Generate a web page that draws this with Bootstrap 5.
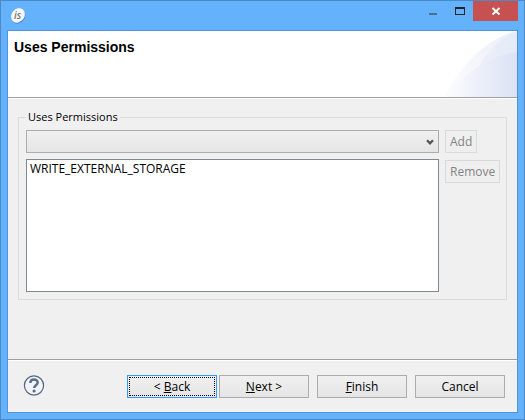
<!DOCTYPE html>
<html lang="en">
<head>
<meta charset="utf-8">
<meta name="viewport" content="width=device-width, initial-scale=1">
<title>Uses Permissions</title>
<link href="https://cdn.jsdelivr.net/npm/bootstrap@5.3.0/dist/css/bootstrap.min.css" rel="stylesheet">
<style>
body { font-family: "Open Sans", "Noto Sans", sans-serif; font-size: 12px; line-height: 16px; color: #000; background: #64b2fc; }
.frame { background: #64b2fc; border: 1px solid #4c8ac6; padding: 0 6px 6px; }
.titlebar { height: 29px; padding-left: 3px; }
.app-icon { margin-top: 6px; }
.caption-btn { border: 0; background: none; padding: 0; width: 27px; height: 20px; }
.caption-close { background: #c75050; width: 45px; }
.client { background: #f0f0f0; border: 1px solid #4f95dc; }
.banner { height: 68px; background: #fff; border-bottom: 1px solid #fff; box-shadow: inset 0 -1px #a0a0a0; }
.banner h1 { font: bold 14px/18px "Liberation Sans", Arial, sans-serif; padding: 7px 6px; }
.banner svg { height: 66px; width: 74px; }
.page { padding: 9px 10px 20px; }
.group { border: 1px solid #dcdcdc; padding: 0 8px 7px 7px; min-width: 0; }
.group legend { float: none; width: auto; font-size: 11px; line-height: 18px; padding: 0 2px; margin: 0 0 4px; }
.perm-select, .perm-list { border-radius: 0; font-size: 12px; color: #000; width: 100%; }
.perm-select { height: 23px; padding: 0 20px 0 4px; border: 1px solid #acacac; appearance: none;
  background: url("data:image/svg+xml,%3Csvg xmlns='http://www.w3.org/2000/svg' width='8' height='7'%3E%3Cpath d='M1 1.2L4 4.4L7 1.2' fill='none' stroke='%23555' stroke-width='2.3'/%3E%3C/svg%3E") no-repeat right 4px top 8px, linear-gradient(#f0f0f0, #e5e5e5); }
.perm-list { height: 133px; border: 1px solid #828790; background: #fff; padding: 0; overflow: hidden; }
.perm-list option { padding: 0 3px; min-height: 16px; line-height: 16px; }
.side { width: 53px; gap: 7px; }
.dlg-btn { border: 1px solid #acacac; border-radius: 0; background: linear-gradient(#f0f0f0, #e5e5e5); color: #000; font-size: 12px; line-height: 16px; padding: 0 4px; height: 23px; }
.dlg-btn:disabled { border-color: #d9d9d9; background: #efefef; color: #838383; opacity: 1; }
.wide { width: 90px; }
.is-default { border-color: #3399ff; outline: 1px dotted #000; outline-offset: -3px; }
.actions { border-top: 1px solid #a0a0a0; box-shadow: inset 0 1px #fff; padding: 15px 12px 14px 15px; }
.help-btn { border: 0; background: none; padding: 0; width: 22px; height: 22px; }
.col-gap { gap: 6px; }
.pair { gap: 2px; }
</style>
<script src="https://cdn.jsdelivr.net/npm/bootstrap@5.3.0/dist/js/bootstrap.bundle.min.js"></script>
</head>
<body>
<div class="frame d-flex flex-column min-vh-100">
  <header class="titlebar d-flex align-items-start">
    <svg class="app-icon me-auto" width="16" height="17" viewBox="0 0 16 17" aria-label="is"><ellipse cx="8.6" cy="9" rx="6.4" ry="7.8" transform="rotate(38 8 9)" fill="#5285ce"/><ellipse cx="8" cy="8.4" rx="6.4" ry="7.7" transform="rotate(38 8 8.4)" fill="#f7f9fc"/><text x="4" y="12" font-family="Open Sans" font-size="10" font-style="italic" font-weight="600" fill="#777">is</text></svg>
    <button class="caption-btn d-flex" aria-label="Minimize"><svg width="27" height="20"><path d="M10 12h8v2h-8z" fill="#47708f"/></svg></button>
    <button class="caption-btn d-flex" aria-label="Maximize"><svg width="27" height="20"><path d="M9 6h10v8H9zM10 8v5h8V8z" fill="#252525" fill-rule="evenodd"/></svg></button>
    <button class="caption-btn caption-close d-flex" aria-label="Close"><svg width="45" height="20"><path d="M19.5 7L26.5 13.5M26.5 7L19.5 13.5" stroke="#fff" stroke-width="2"/></svg></button>
  </header>
  <main class="client d-flex flex-column flex-grow-1">
    <div class="banner d-flex justify-content-between align-items-start">
      <h1 class="m-0">Uses Permissions</h1>
      <svg viewBox="0 0 74 66" preserveAspectRatio="none" aria-hidden="true">
        <defs><linearGradient id="g1"><stop offset="0" stop-color="#fbfcfe"/><stop offset=".5" stop-color="#f3f5fc"/><stop offset="1" stop-color="#e9edf9"/></linearGradient><linearGradient id="g2"><stop offset="0" stop-color="#fdfdff"/><stop offset=".4" stop-color="#eef1fa"/><stop offset="1" stop-color="#dce2f5"/></linearGradient></defs>
        <path d="M2 66C16 36 42 8 74 0V66z" fill="url(#g1)"/><path d="M36 36C46 18 58 6 74 1V66H20z" fill="#dfe5f7" opacity=".4"/><path d="M4 66C22 43 43 25 74 21V66z" fill="url(#g2)"/>
      </svg>
    </div>
    <div class="page">
      <fieldset class="group">
        <legend>Uses Permissions</legend>
        <div class="d-flex col-gap">
          <div class="d-flex flex-column flex-grow-1 col-gap">
            <select class="perm-select" aria-label="Permission"><option></option></select>
            <select class="perm-list" size="8" aria-label="Selected permissions"><option>WRITE_EXTERNAL_STORAGE</option></select>
          </div>
          <div class="side d-flex flex-column align-items-start">
            <button class="dlg-btn" disabled>Add</button>
            <button class="dlg-btn" disabled>Remove</button>
          </div>
        </div>
      </fieldset>
    </div>
    <footer class="actions d-flex align-items-start mt-auto">
      <button class="help-btn me-auto d-flex" aria-label="Help"><svg width="22" height="22" viewBox="0 0 22 22"><circle cx="11" cy="10.5" r="9.6" fill="#f4f4f6" stroke="#536784" stroke-width="1.2"/><path d="M7.3 8C7.3 3.3 14.7 3.5 14.7 7.6C14.7 10.3 11.2 10.2 11.2 13" fill="none" stroke="#5a6d90" stroke-width="2.4"/><circle cx="11.1" cy="16" r="1.6" fill="#5a6d90"/></svg></button>
      <div class="d-flex gap-2">
        <div class="d-flex pair"><button class="dlg-btn wide is-default">&lt; <u>B</u>ack</button><button class="dlg-btn wide"><u>N</u>ext &gt;</button></div>
        <button class="dlg-btn wide"><u>F</u>inish</button>
        <button class="dlg-btn wide">Cancel</button>
      </div>
    </footer>
  </main>
</div>
</body>
</html>
